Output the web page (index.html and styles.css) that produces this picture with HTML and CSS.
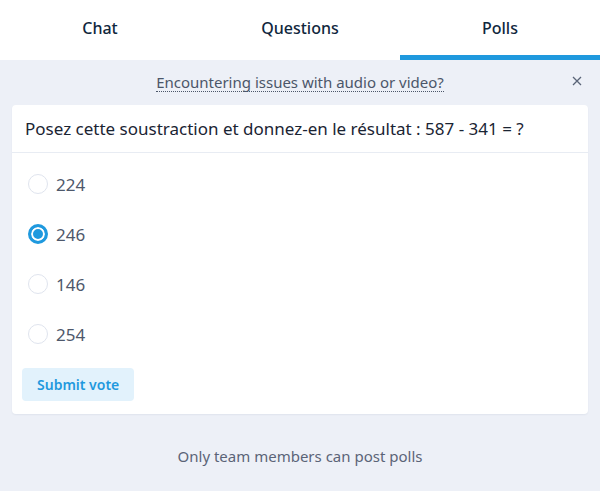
FILE: index.html
```html
<!DOCTYPE html>
<html>
<head>
<meta charset="utf-8">
<link rel="stylesheet" href="styles.css">
</head>
<body>
<div class="app">
  <nav class="tabs">
    <div class="tab">Chat</div>
    <div class="tab">Questions</div>
    <div class="tab active">Polls</div>
  </nav>
  <main class="content">
    <div class="banner">
      <span class="banner-link">Encountering issues with audio or video?</span>
      <span class="close">
        <svg width="10" height="10" viewBox="0 0 10 10"><path d="M1 1L9 9M9 1L1 9" stroke="#5a6478" stroke-width="1.3" fill="none"/></svg>
      </span>
    </div>
    <section class="card">
      <div class="question">Posez cette soustraction et donnez-en le résultat : 587 - 341 = ?</div>
      <div class="options">
        <label class="option"><span class="radio"></span><span class="opt-text">224</span></label>
        <label class="option"><span class="radio checked"></span><span class="opt-text">246</span></label>
        <label class="option"><span class="radio"></span><span class="opt-text">146</span></label>
        <label class="option"><span class="radio"></span><span class="opt-text">254</span></label>
      </div>
      <div class="actions"><button class="submit">Submit vote</button></div>
    </section>
    <p class="footer-note">Only team members can post polls</p>
  </main>
</div>
</body>
</html>
```
FILE: styles.css
```css
* { box-sizing: border-box; }
html, body { margin: 0; padding: 0; }
body {
  font-family: "Noto Sans", "Open Sans", sans-serif;
  background: #edf0f7;
  width: 600px;
  height: 491px;
  overflow: hidden;
}
.tabs {
  display: flex;
  height: 60px;
  background: #fff;
}
.tab {
  flex: 1;
  display: flex;
  align-items: center;
  justify-content: center;
  font-size: 16px;
  font-weight: 500;
  color: #10273d;
  border-bottom: 5px solid transparent;
}
.tab.active { border-bottom-color: #1f99de; }
.content { padding: 0 12px; }
.banner {
  height: 45px;
  display: flex;
  align-items: center;
  justify-content: center;
  position: relative;
  font-size: 15px;
  color: #4b5669;
}
.banner-link {
  border-bottom: 1px dotted #4b5669;
  line-height: 18px;
}
.close {
  position: absolute;
  right: 6px;
  top: 16px;
  display: flex;
}
.card {
  background: #fff;
  border-radius: 4px;
  box-shadow: 0 1px 2px rgba(20, 40, 80, 0.06);
}
.question {
  height: 48px;
  display: flex;
  align-items: center;
  padding: 0 13px;
  font-size: 17px;
  color: #1a2433;
  border-bottom: 1px solid #e8ecf3;
}
.options { padding-top: 6px; }
.option {
  display: flex;
  align-items: center;
  height: 50px;
  padding-left: 16px;
}
.radio {
  width: 20px;
  height: 20px;
  border-radius: 50%;
  border: 1px solid #dfe4ee;
  margin-right: 8px;
  background: #fff;
}
.radio.checked {
  border: 3px solid #1f99de;
  box-shadow: inset 0 0 0 2px #fff;
  background: #1f99de;
}
.opt-text {
  font-size: 17px;
  color: #4e586b;
}
.actions { padding: 9px 10px 13px; }
.submit {
  font-family: inherit;
  font-size: 14px;
  font-weight: 600;
  color: #1f99de;
  background: #e2f2fc;
  border: none;
  border-radius: 4px;
  height: 33px;
  padding: 0 15px;
}
.footer-note {
  margin: 0;
  padding-top: 32px;
  text-align: center;
  font-size: 15px;
  color: #5b6477;
}
```
